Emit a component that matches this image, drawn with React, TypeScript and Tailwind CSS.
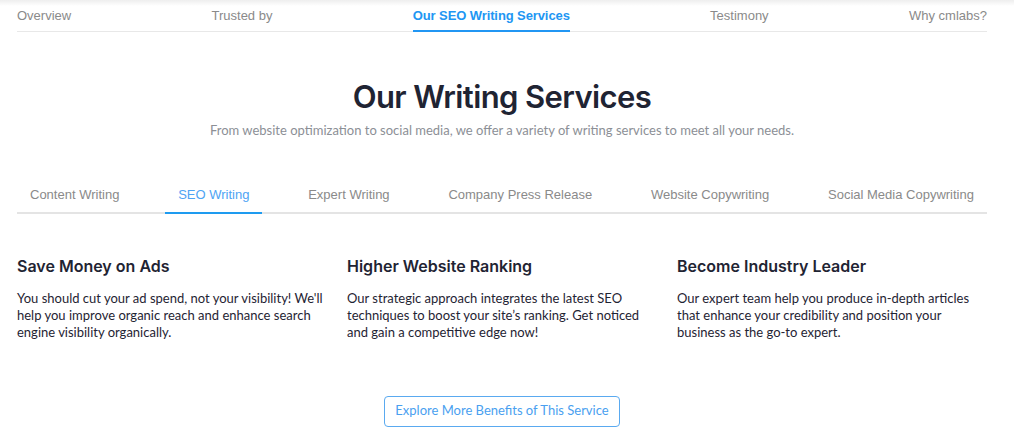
const navItems = ["Overview", "Trusted by", "Our SEO Writing Services", "Testimony", "Why cmlabs?"];

const tabs = [
  "Content Writing",
  "SEO Writing",
  "Expert Writing",
  "Company Press Release",
  "Website Copywriting",
  "Social Media Copywriting",
];

const benefits = [
  {
    title: "Save Money on Ads",
    body: "You should cut your ad spend, not your visibility! We'll help you improve organic reach and enhance search engine visibility organically.",
  },
  {
    title: "Higher Website Ranking",
    body: "Our strategic approach integrates the latest SEO techniques to boost your site’s ranking. Get noticed and gain a competitive edge now!",
  },
  {
    title: "Become Industry Leader",
    body: "Our expert team help you produce in-depth articles that enhance your credibility and position your business as the go-to expert.",
  },
];

const arial = "font-['Liberation_Sans',Arial,sans-serif]";
const heading = "font-['Inter','Noto_Sans',sans-serif]";
const body = "font-['Lato','Noto_Sans',sans-serif]";

export default function App() {
  return (
    <div className="w-[1014px] h-[439px] bg-white overflow-hidden">
      {/* sticky sub-nav */}
      <div className="h-[6px] bg-gradient-to-b from-[#eeeeee] to-white" />
      <div className="w-[970px] ml-[17px]">
        <nav className={`flex justify-between border-b border-[#e8e8e8] text-[13px] ${arial}`}>
          {navItems.map((item, i) =>
            i === 2 ? (
              <span key={item} className="pb-[4px] font-bold text-[#2196f3] border-b-2 border-[#2196f3] -mb-px tracking-[-0.1px]">
                {item}
              </span>
            ) : (
              <span key={item} className="pb-[5px] text-[#8a8a8a]">
                {item}
              </span>
            )
          )}
        </nav>

        {/* heading */}
        <div className="text-center pt-[46px]">
          <h2 className={`${heading} text-[31px] leading-[38px] font-semibold text-[#1f2433] tracking-[-0.6px]`}>
            Our Writing Services
          </h2>
          <p className={`${body} mt-[5px] text-[13px] text-[#8c8f96]`}>
            From website optimization to social media, we offer a variety of writing services to meet all your needs.
          </p>
        </div>

        {/* service tabs */}
        <div className={`mt-[45px] flex justify-between border-b-2 border-[#e4e4e4] text-[13px] ${arial}`}>
          {tabs.map((tab, i) =>
            i === 1 ? (
              <span key={tab} className="px-[13px] pb-[7px] text-[#4ea4f4] border-b-2 border-[#1e9bf0] -mb-[2px]">
                {tab}
              </span>
            ) : (
              <span key={tab} className="px-[13px] pb-[7px] text-[#8a8a8a]">
                {tab}
              </span>
            )
          )}
        </div>

        {/* benefits */}
        <div className="grid grid-cols-3 gap-5 mt-[41px]">
          {benefits.map((b) => (
            <div key={b.title}>
              <h3 className={`${heading} text-[16px] leading-[22px] font-semibold text-[#1f2433]`}>{b.title}</h3>
              <p className={`${body} mt-[13px] text-[13px] leading-[17px] text-[#1f2433]`}>{b.body}</p>
            </div>
          ))}
        </div>

        <div className="flex justify-center mt-[55px]">
          <button className={`${body} h-[31px] px-[10px] rounded-[4px] border border-[#5aaaf0] text-[13px] text-[#4a9ff0]`}>
            Explore More Benefits of This Service
          </button>
        </div>
      </div>
    </div>
  );
}
